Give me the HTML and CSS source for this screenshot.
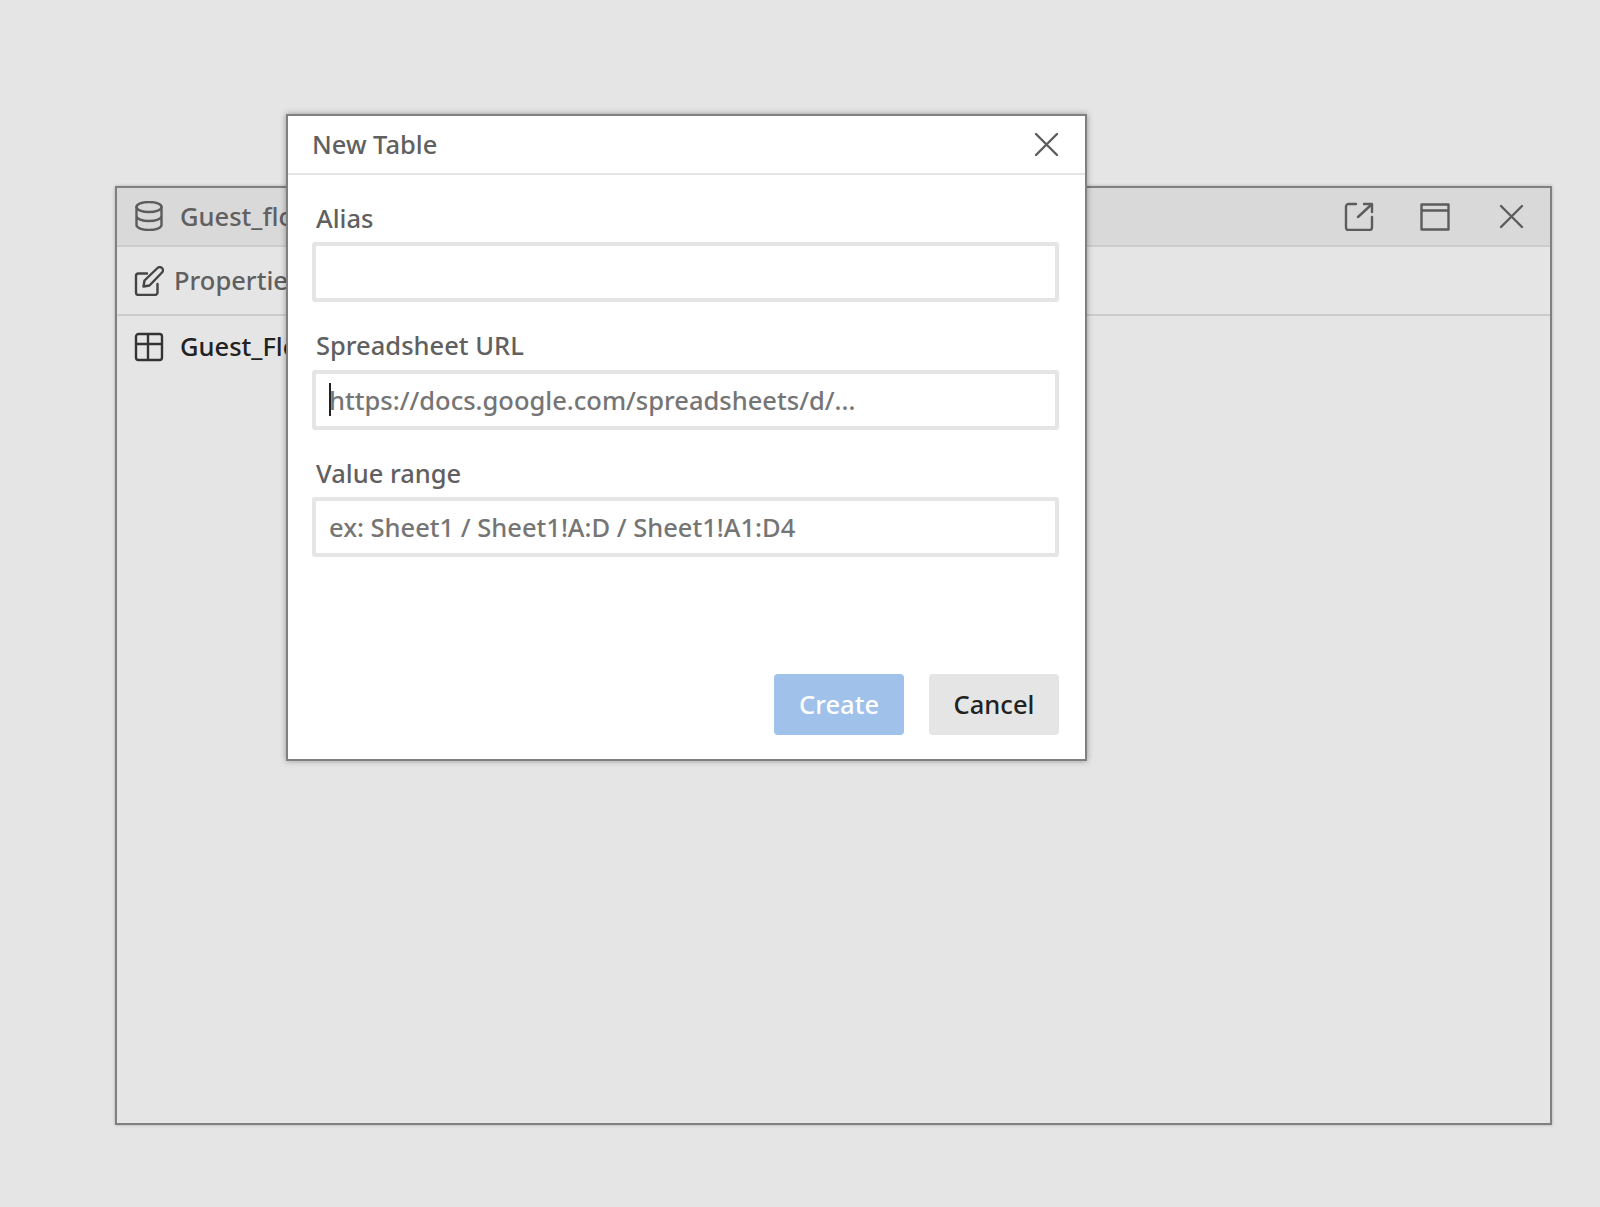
FILE: index.html
```html
<!DOCTYPE html>
<html lang="en">
<head>
<meta charset="utf-8">
<title>New Table</title>
<link rel="stylesheet" href="styles.css">
</head>
<body>
<section class="window">
  <header class="win-title">
    <svg class="icon" viewBox="0 0 30 30"><ellipse cx="15" cy="6" rx="12.500" ry="5"/><path d="M2.500 6v18c0 2.800 5.600 5 12.500 5s12.500-2.200 12.500-5V6M2.500 15c0 2.800 5.600 5 12.500 5s12.500-2.200 12.500-5"/></svg>
    <span class="win-name">Guest_floor</span>
    <div class="win-actions">
      <svg class="icon" viewBox="0 0 30 30"><path d="M12 3H4.500A2.500 2.500 0 0 0 2 5.500v21A2.500 2.500 0 0 0 4.500 29h21a2.500 2.500 0 0 0 2.500-2.500V16M14 16 27 4M20 3h8v8"/></svg>
      <svg class="icon" viewBox="0 0 30 30"><path d="M1.500 3.500h27v25h-27zM1.500 9.500h27"/></svg>
      <svg class="icon" viewBox="0 0 30 30"><path d="M5 5l21 21M26 5 5 26"/></svg>
    </div>
  </header>
  <div class="win-tabs">
    <svg class="icon icon-mid" viewBox="0 0 30 30"><path d="M13 7.500H4.500A2.500 2.500 0 0 0 2 10v16.500A2.500 2.500 0 0 0 4.500 29H21a2.500 2.500 0 0 0 2.500-2.500V18M9.500 20.500l1-6L23.500 2a3.200 3.200 0 0 1 4.500 0 3.200 3.200 0 0 1 0 4.500L15.500 19.500z"/></svg>
    <span class="win-tab-name">Properties</span>
  </div>
  <div class="win-row">
    <svg class="icon icon-dark" viewBox="0 0 30 30"><path d="M4.500 2h21A2.500 2.500 0 0 1 28 4.500v21a2.500 2.500 0 0 1-2.500 2.500h-21A2.500 2.500 0 0 1 2 25.500v-21A2.500 2.500 0 0 1 4.500 2zM2 12h26M14 2v26"/></svg>
    <span class="win-row-name">Guest_Floor</span>
  </div>
</section>

<section class="modal">
  <header class="modal-head">
    <h1 class="modal-title">New Table</h1>
    <svg class="icon" viewBox="0 0 30 30"><path d="M5 5l21 21M26 5 5 26"/></svg>
  </header>
  <form class="modal-body">
    <label class="field">
      <span class="field-label">Alias</span>
      <span class="input"></span>
    </label>
    <label class="field">
      <span class="field-label">Spreadsheet URL</span>
      <span class="input"><i class="caret"></i>https://docs.google.com/spreadsheets/d/...</span>
    </label>
    <label class="field">
      <span class="field-label">Value range</span>
      <span class="input">ex: Sheet1 / Sheet1!A:D / Sheet1!A1:D4</span>
    </label>
    <div class="modal-actions">
      <button type="button" class="btn btn-primary">Create</button>
      <button type="button" class="btn btn-cancel">Cancel</button>
    </div>
  </form>
</section>
</body>
</html>
```
FILE: styles.css
```css
* { box-sizing: border-box; }
html, body { margin: 0; height: 100%; }
body {
  position: relative;
  height: 1207px;
  overflow: hidden;
  background: #e5e5e5;
  font-family: "Noto Sans", sans-serif;
  font-size: 25.5px;
  font-weight: 500;
  color: #606060;
}
.icon {
  flex: none;
  width: 30px;
  height: 30px;
  fill: none;
  stroke: #5c5c5c;
  stroke-width: 2.4;
  stroke-linecap: round;
  stroke-linejoin: round;
}
.icon-mid { stroke: #444; }
.icon-dark { stroke: #333; }

.window {
  position: absolute;
  left: 115px;
  top: 186px;
  width: 1437px;
  height: 939px;
  border: 2px solid #808080;
  box-shadow: 0 0 3px rgba(0, 0, 0, .25);
  background: #e5e5e5;
}
.win-title {
  display: flex;
  align-items: center;
  height: 59px;
  padding: 0 24px 2px 17px;
  background: #d9d9d9;
  border-bottom: 2px solid #ccc;
}
.win-name { margin-left: 16px; }
.win-actions { margin-left: auto; display: flex; gap: 46px; }
.win-tabs {
  display: flex;
  align-items: center;
  height: 69px;
  padding-left: 17px;
  border-bottom: 2px solid #ccc;
}
.win-tab-name { margin-left: 10px; padding-bottom: 2px; }
.win-row {
  display: flex;
  align-items: center;
  height: 61px;
  padding-left: 17px;
  color: #222;
}
.win-row-name { margin-left: 16px; padding-bottom: 2px; }

.modal {
  position: absolute;
  left: 286px;
  top: 114px;
  width: 801px;
  height: 647px;
  background: #fff;
  border: 2px solid #808080;
  box-shadow: 0 0 6px rgba(0, 0, 0, .35);
}
.modal-head {
  display: flex;
  align-items: center;
  justify-content: space-between;
  height: 59px;
  padding: 0 24px 2px;
  border-bottom: 2px solid #e5e5e5;
}
.modal-title { margin: 0; font-size: inherit; font-weight: inherit; }
.modal-body {
  display: flex;
  flex-direction: column;
  height: 584px;
  padding: 23.500px 26px 24px 24px;
}
.field { display: block; margin-bottom: 24px; }
.field-label { display: block; height: 40px; line-height: 38px; margin-bottom: 3.500px; padding-left: 4px; }
.input {
  position: relative;
  display: block;
  height: 60px;
  line-height: 52px;
  padding: 0 13px;
  border: 4px solid #e5e5e5;
  border-radius: 3px;
  color: #757575;
  white-space: nowrap;
}
.caret {
  position: absolute;
  left: 13px;
  top: 9px;
  width: 2px;
  height: 33px;
  background: #222;
}
.modal-actions { margin-top: auto; display: flex; justify-content: flex-end; gap: 25px; }
.btn {
  width: 130px;
  height: 61px;
  padding: 0 0 2px;
  border: 0;
  border-radius: 4px;
  font: inherit;
}
.btn-primary { background: #9fc1ea; color: #fff; }
.btn-cancel { background: #e5e5e5; color: #222; }
```
